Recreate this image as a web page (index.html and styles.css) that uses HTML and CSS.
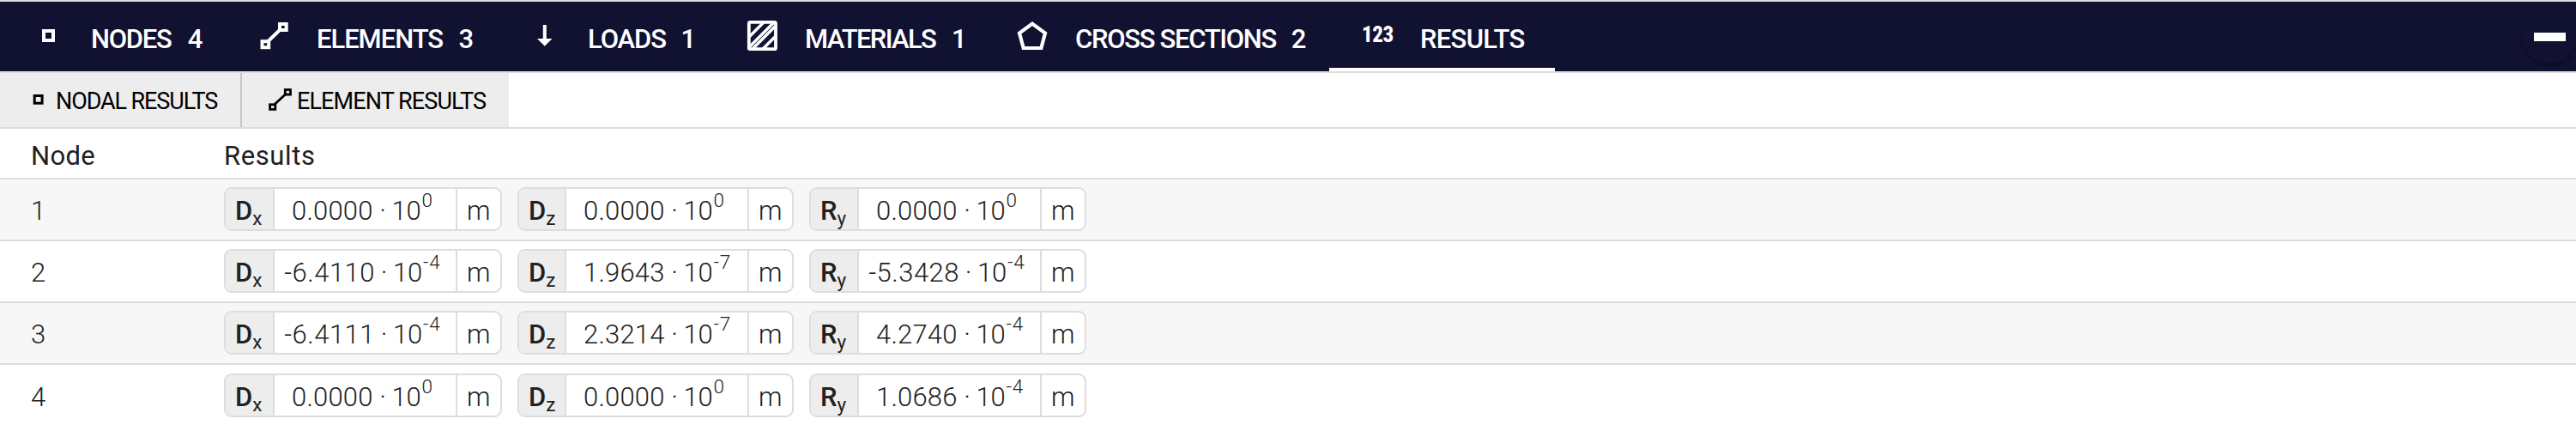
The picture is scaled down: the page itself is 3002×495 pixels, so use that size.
FILE: index.html
```html
<!DOCTYPE html>
<html lang="en">
<head>
<meta charset="utf-8">
<title>Results</title>
<link rel="stylesheet" href="styles.css">
</head>
<body>
<nav class="nav">
  <div class="item nodes">
    <svg class="icon" viewBox="0 0 48 49"><rect x="19" y="18" width="11" height="11" fill="none" stroke="#fff" stroke-width="4"/></svg>
    <span class="label">NODES</span><span class="count">4</span>
  </div>
  <div class="item elements">
    <svg class="icon" viewBox="0 0 48 49" fill="none" stroke="#fff" stroke-width="4"><rect x="31" y="10" width="7.7" height="7"/><rect x="10.5" y="30.2" width="7.7" height="7"/><path d="M17 30.5 32 16"/></svg>
    <span class="label">ELEMENTS</span><span class="count">3</span>
  </div>
  <div class="item loads">
    <svg class="icon" viewBox="0 0 48 49"><path fill="#fff" d="M21.8 11h4v16h6.7l-8.7 8.7L15 27h6.8z"/></svg>
    <span class="label">LOADS</span><span class="count one">1</span>
  </div>
  <div class="item materials">
    <svg class="icon" viewBox="0 0 48 49" fill="none" stroke="#fff"><rect x="8.8" y="7.8" width="31.2" height="31.4" rx="1.5" stroke-width="3.8"/><path stroke-width="3.4" d="M9 25 26 8M9 37 38 8M12 40 40 12M24 40 40 24"/></svg>
    <span class="label">MATERIALS</span><span class="count one">1</span>
  </div>
  <div class="item sections">
    <svg class="icon" viewBox="0 0 48 49"><path fill="none" stroke="#fff" stroke-width="4.2" d="M24 9.6 39 20.6 34.4 38H13.7L9 20.6z"/></svg>
    <span class="label">CROSS SECTIONS</span><span class="count">2</span>
  </div>
  <div class="item results active">
    <span class="icon digits">123</span>
    <span class="label">RESULTS</span>
  </div>
  <button class="collapse" aria-label="Collapse"><span class="minus"></span></button>
</nav>
<div class="subtabs">
  <div class="subtab">
    <svg class="small" viewBox="0 0 28 27"><rect x="9.2" y="8.5" width="8.9" height="8.7" fill="none" stroke="#000" stroke-width="3"/></svg>
    <span>NODAL RESULTS</span>
  </div>
  <div class="subtab second">
    <svg class="small" viewBox="0 0 28 27" fill="none" stroke="#000" stroke-width="2.8"><rect x="20.3" y="1.5" width="6.2" height="5.6"/><rect x="2.6" y="18.8" width="6.2" height="5.6"/><path d="M8 18.5 21 6.5"/></svg>
    <span>ELEMENT RESULTS</span>
  </div>
</div>
<div class="row head"><div class="id">Node</div><div class="wide">Results</div></div>
<div class="row odd">
  <div class="id">1</div>
  <div class="chip dx"><div class="name">D<sub>x</sub></div><div class="value"><span class="mant">0.0000</span><span class="dot">·</span><span class="base">10</span><sup>0</sup></div><div class="unit">m</div></div>
  <div class="chip dz"><div class="name">D<sub>z</sub></div><div class="value"><span class="mant">0.0000</span><span class="dot">·</span><span class="base">10</span><sup>0</sup></div><div class="unit">m</div></div>
  <div class="chip ry"><div class="name">R<sub>y</sub></div><div class="value"><span class="mant">0.0000</span><span class="dot">·</span><span class="base">10</span><sup>0</sup></div><div class="unit">m</div></div>
</div>
<div class="row">
  <div class="id">2</div>
  <div class="chip dx"><div class="name">D<sub>x</sub></div><div class="value neg"><span class="mant">-6.4110</span><span class="dot">·</span><span class="base">10</span><sup>-4</sup></div><div class="unit">m</div></div>
  <div class="chip dz"><div class="name">D<sub>z</sub></div><div class="value"><span class="mant">1.9643</span><span class="dot">·</span><span class="base">10</span><sup>-7</sup></div><div class="unit">m</div></div>
  <div class="chip ry"><div class="name">R<sub>y</sub></div><div class="value neg"><span class="mant">-5.3428</span><span class="dot">·</span><span class="base">10</span><sup>-4</sup></div><div class="unit">m</div></div>
</div>
<div class="row odd">
  <div class="id">3</div>
  <div class="chip dx"><div class="name">D<sub>x</sub></div><div class="value neg"><span class="mant">-6.4111</span><span class="dot">·</span><span class="base">10</span><sup>-4</sup></div><div class="unit">m</div></div>
  <div class="chip dz"><div class="name">D<sub>z</sub></div><div class="value"><span class="mant">2.3214</span><span class="dot">·</span><span class="base">10</span><sup>-7</sup></div><div class="unit">m</div></div>
  <div class="chip ry"><div class="name">R<sub>y</sub></div><div class="value"><span class="mant">4.2740</span><span class="dot">·</span><span class="base">10</span><sup>-4</sup></div><div class="unit">m</div></div>
</div>
<div class="row last">
  <div class="id">4</div>
  <div class="chip dx"><div class="name">D<sub>x</sub></div><div class="value"><span class="mant">0.0000</span><span class="dot">·</span><span class="base">10</span><sup>0</sup></div><div class="unit">m</div></div>
  <div class="chip dz"><div class="name">D<sub>z</sub></div><div class="value"><span class="mant">0.0000</span><span class="dot">·</span><span class="base">10</span><sup>0</sup></div><div class="unit">m</div></div>
  <div class="chip ry"><div class="name">R<sub>y</sub></div><div class="value"><span class="mant">1.0686</span><span class="dot">·</span><span class="base">10</span><sup>-4</sup></div><div class="unit">m</div></div>
</div>
</body>
</html>
```
FILE: styles.css
```css
* { box-sizing: border-box; }
html { overflow: hidden; }
body {
  margin: 0;
  height: 495px;
  overflow: hidden;
  background: #fff;
  color: #212121;
  font: 400 31px/31px Roboto, "Open Sans", sans-serif;
  white-space: nowrap;
}

/* Main tab bar */
.nav {
  display: flex;
  height: 85px;
  border-top: 2px solid #ddd;
  border-bottom: 2px solid #ddd;
  background: #111132;
  color: #fff;
  font-weight: 500;
}
.item {
  display: flex;
  align-items: center;
  height: 81px;
  padding: 0 28px 0 32px;
}
.nodes { width: 263px; letter-spacing: -1.3px; }
.elements { width: 316px; letter-spacing: -1.05px; }
.loads { width: 253px; letter-spacing: -1.1px; }
.materials { width: 315px; letter-spacing: -1.65px; }
.sections { width: 402px; letter-spacing: -1.3px; }
.results { width: 263px; letter-spacing: -.7px; }
.active { border-bottom: 4px solid #fff; }
.icon { flex: none; width: 48px; height: 49px; margin-right: 26px; }
.active .icon { margin-top: 4px; }
.digits {
  padding: 7px 0 0 6px;
  font-size: 25px;
  font-weight: 800;
  font-stretch: 75%;
  letter-spacing: -.4px;
}
.label, .count { padding-top: 6px; }
.active .label { padding-top: 10px; }
.count { margin-left: auto; }
.one { margin-right: -6px; }
.collapse {
  display: flex;
  align-items: center;
  justify-content: center;
  width: 64px;
  height: 64px;
  margin: 8px -1px 0 auto;
  padding: 0;
  border: 0;
  border-radius: 50%;
  background: #111132;
  box-shadow: 0 3px 5px rgba(0, 0, 0, .3);
}
.minus { width: 37px; height: 10px; margin-top: 2px; background: #fff; }

/* Result type tabs */
.subtabs {
  display: flex;
  height: 65px;
  border-bottom: 2px solid #ddd;
  color: #000;
  font-size: 27px;
  letter-spacing: -1.1px;
}
.subtab {
  display: flex;
  align-items: center;
  width: 282px;
  padding-left: 31px;
  border-right: 2px solid #c8c8c8;
  background: #ededed;
}
.second { width: 311px; padding-left: 30px; border-right: 0; letter-spacing: -.9px; }
.subtab span { padding: 3px 0 0 1px; }
.small { flex: none; width: 28px; height: 27px; margin-right: 5px; }

/* Table */
.row {
  display: flex;
  align-items: flex-start;
  height: 72px;
  padding-top: 9px;
  border-bottom: 2px solid #ddd;
}
.odd { background: #f7f7f7; }
.last { padding-top: 10px; }
.head { height: 59px; padding-top: 16px; letter-spacing: .3px; }
.wide { letter-spacing: .6px; }
.id { flex: none; width: 261px; padding-left: 36px; }
.row:not(.head) .id { padding-top: 12px; font-weight: 300; }

.chip {
  display: flex;
  height: 51px;
  margin-right: 18px;
  border: 2px solid #ddd;
  border-radius: 9px;
  background: #fff;
  overflow: hidden;
  font-weight: 300;
}
.chip > div { padding-top: 10px; }
.dx { width: 324px; }
.dz { width: 322px; }
.ry { width: 323px; }
.name {
  flex: 1;
  padding-left: 11px;
  border-right: 2px solid #ddd;
  background: #ededed;
  font-weight: 500;
  letter-spacing: -1px;
}
.chip .value {
  width: 213px;
  padding-left: 20px;
  border-right: 2px solid #ddd;
}
.chip .neg { padding-left: 8px; }
.value span { display: inline-block; }
.mant { width: 95.5px; letter-spacing: .2px; }
.neg .mant { width: 109px; text-align: right; letter-spacing: .5px; }
.dot { width: 21px; text-align: center; }
.base { width: 34px; letter-spacing: -.2px; }
.unit { width: 50px; padding-left: 11px; }
sub, sup { font-size: 22.5px; line-height: 0; }
sub { margin-left: 1px; font-weight: 400; vertical-align: -6px; }
sup { margin-left: 1px; letter-spacing: .8px; vertical-align: 15px; }
```
